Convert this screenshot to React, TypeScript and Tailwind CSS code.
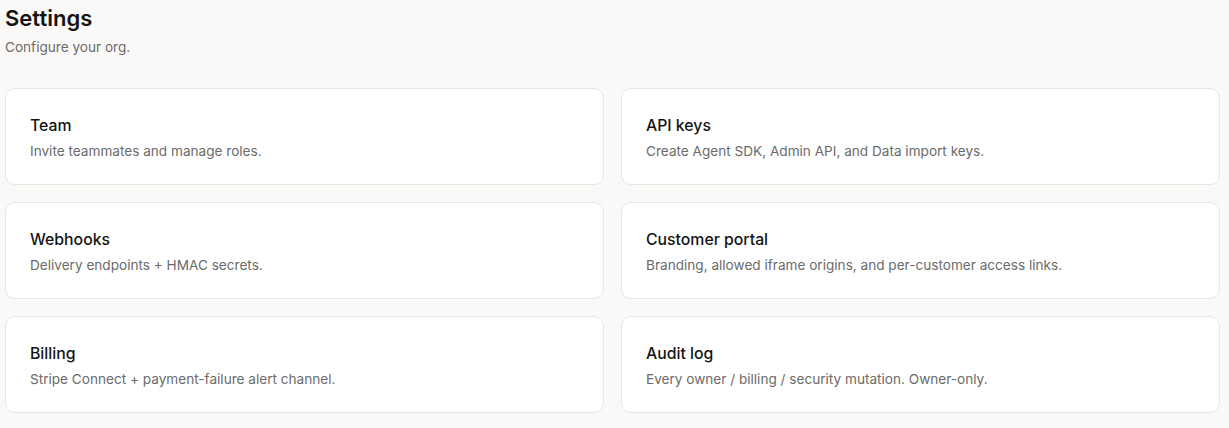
const sections = [
  { title: 'Team', desc: 'Invite teammates and manage roles.' },
  { title: 'API keys', desc: 'Create Agent SDK, Admin API, and Data import keys.' },
  { title: 'Webhooks', desc: 'Delivery endpoints + HMAC secrets.' },
  { title: 'Customer portal', desc: 'Branding, allowed iframe origins, and per-customer access links.' },
  { title: 'Billing', desc: 'Stripe Connect + payment-failure alert channel.' },
  { title: 'Audit log', desc: 'Every owner / billing / security mutation. Owner-only.' },
];

function SettingsCard({ title, desc }: { title: string, desc: string }) {
  return (
    <div className="bg-white border border-[#e8e6e3] rounded-[10px] px-6 pt-[3px] h-[97px] flex flex-col justify-center">
      <p className="text-[15.8px] leading-[22px] font-medium text-[#141414]">{title}</p>
      <p className="mt-[4px] text-[13.6px] leading-5 text-[#6b6b6b]">{desc}</p>
    </div>
  );
}

export default function App() {
  return (
    <div className="min-h-screen bg-[#faf9f7] pl-[5px] pr-[9px] pt-[4px] font-['Inter',sans-serif]">
      <h1 className="text-[22px] leading-[28px] font-semibold text-[#141414]">Settings</h1>
      <p className="mt-[5px] text-[13.6px] leading-5 text-[#6b6b6b]">Configure your org.</p>
      <div className="mt-[31px] grid grid-cols-2 gap-x-[17px] gap-y-[17px]">
        {sections.map((s) => (
          <SettingsCard key={s.title} title={s.title} desc={s.desc} />
        ))}
      </div>
    </div>
  );
}
